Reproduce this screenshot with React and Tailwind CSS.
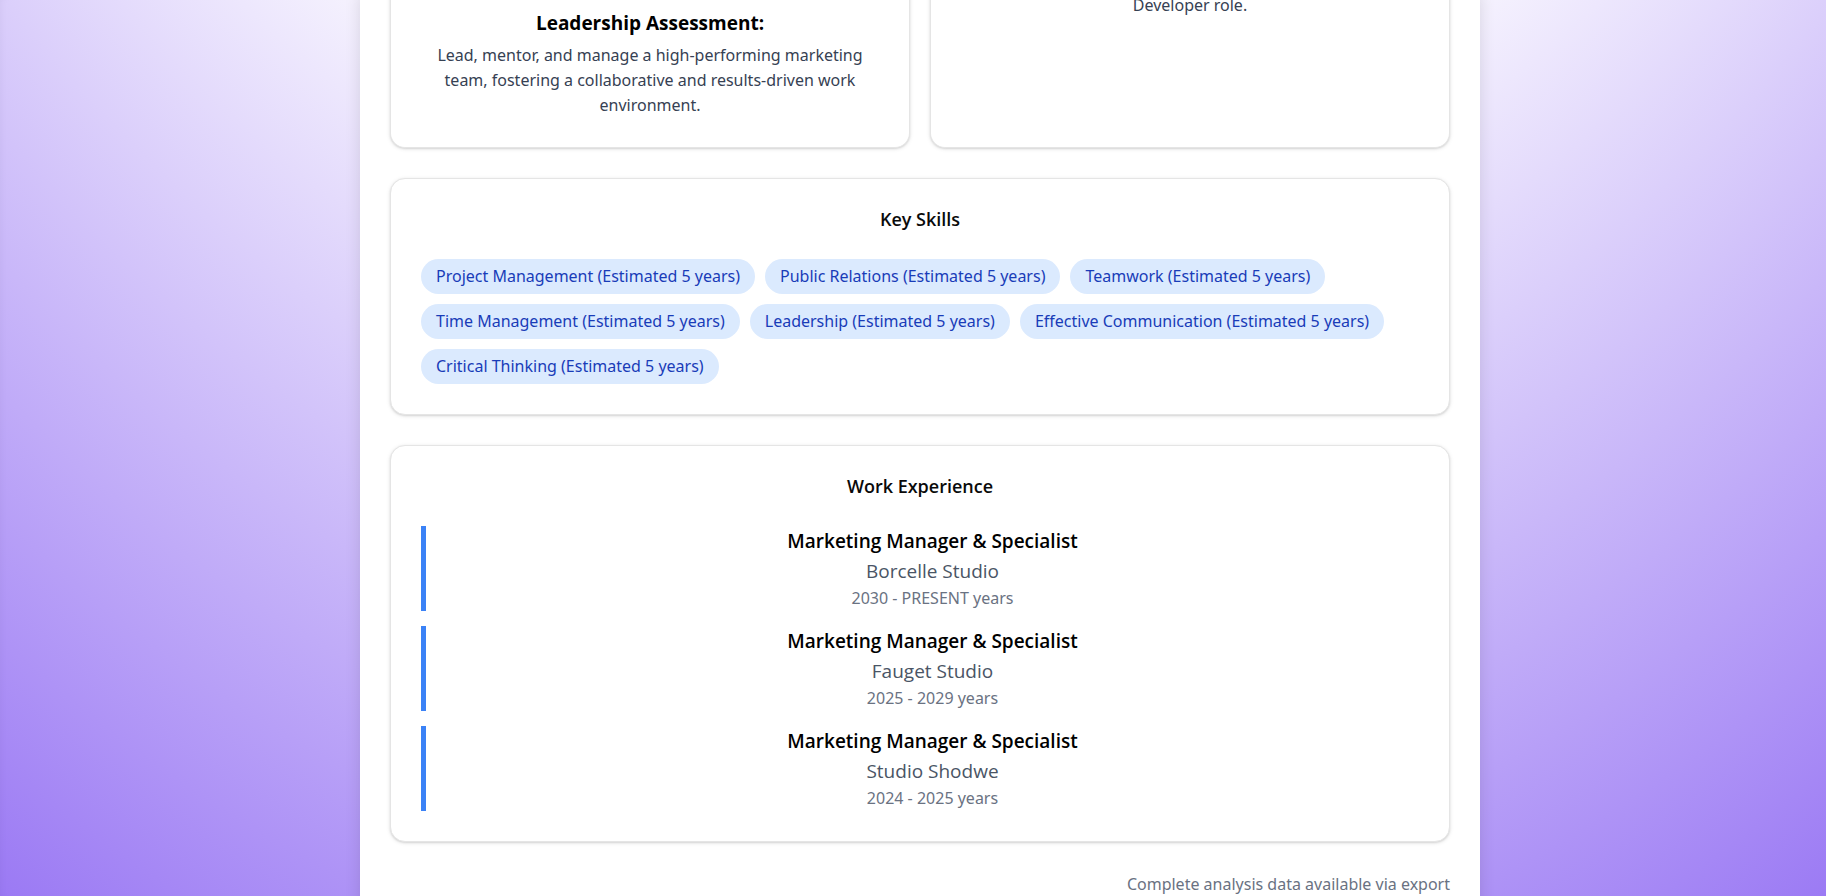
const skills = [
  "Project Management",
  "Public Relations",
  "Teamwork",
  "Time Management",
  "Leadership",
  "Effective Communication",
  "Critical Thinking",
];

const jobs = [
  { title: "Marketing Manager & Specialist", company: "Borcelle Studio", period: "2030 - PRESENT" },
  { title: "Marketing Manager & Specialist", company: "Fauget Studio", period: "2025 - 2029" },
  { title: "Marketing Manager & Specialist", company: "Studio Shodwe", period: "2024 - 2025" },
];

const surface = "border border-[#e5e5e5] bg-white shadow-[0_1px_4px_rgba(0,0,0,0.1),0_1px_2px_rgba(0,0,0,0.1)]";
const small = "font-['Noto_Sans',sans-serif] text-[16px] leading-[25px]";

function Card({ title, children }) {
  return (
    <section className={`${surface} rounded-[15px] p-[30px]`}>
      <h2 className="mb-[30px] text-center text-[18px] leading-5 font-semibold">{title}</h2>
      {children}
    </section>
  );
}

export default function App() {
  return (
    <div className="h-screen overflow-hidden bg-[radial-gradient(2300px_3312px_at_calc(50%+7px)_-1465px,#fff_47%,#63e_100%)] pl-[14px] font-['Open_Sans','Noto_Sans',sans-serif] text-[#0a0a0a] shadow-[inset_6px_0_8px_-6px_rgba(0,0,0,0.05)]">
      <main className="mx-auto -mt-[7px] flex max-w-[1120px] flex-col gap-[30px] bg-white px-[30px] pb-[30px] shadow-[0_0_15px_rgba(0,0,0,0.12)]">
        <div className="grid grid-cols-2 gap-5">
          <section className={`${surface} rounded-b-[15px] border-t-0 px-[30px] pt-[15px] pb-[29px] text-center`}>
            <h3 className="mb-[5px] text-[19px] leading-[30px] font-bold text-black">Leadership Assessment:</h3>
            <p className={`${small} text-[#364153]`}>
              Lead, mentor, and manage a high-performing marketing team, fostering a collaborative and results-driven work environment.
            </p>
          </section>
          <section className={`${surface} rounded-b-[15px] border-t-0 px-[30px] pb-[29px] text-center`}>
            <p className={`${small} text-[#364153]`}>Developer role.</p>
          </section>
        </div>

        <Card title="Key Skills">
          <ul className="flex flex-wrap gap-[10px]">
            {skills.map((skill) => (
              <li key={skill} className={`${small} rounded-full bg-[#dbeafe] px-[15px] py-[5px] text-[#193cb8]`}>
                {skill} (Estimated 5 years)
              </li>
            ))}
          </ul>
        </Card>

        <Card title="Work Experience">
          <ol className="flex flex-col gap-[15px]">
            {jobs.map((job) => (
              <li key={job.company} className="border-l-[5px] border-[#3b82f6] pl-5 text-center">
                <h3 className="text-[19px] leading-[30px] font-semibold text-black">{job.title}</h3>
                <p className="text-[19px] leading-[30px] text-[#4a5565]">{job.company}</p>
                <p className={`${small} text-[#6a7282]`}>{job.period} years</p>
              </li>
            ))}
          </ol>
        </Card>

        <p className={`${small} text-right text-[#6a7282]`}>Complete analysis data available via export</p>
      </main>
    </div>
  );
}
